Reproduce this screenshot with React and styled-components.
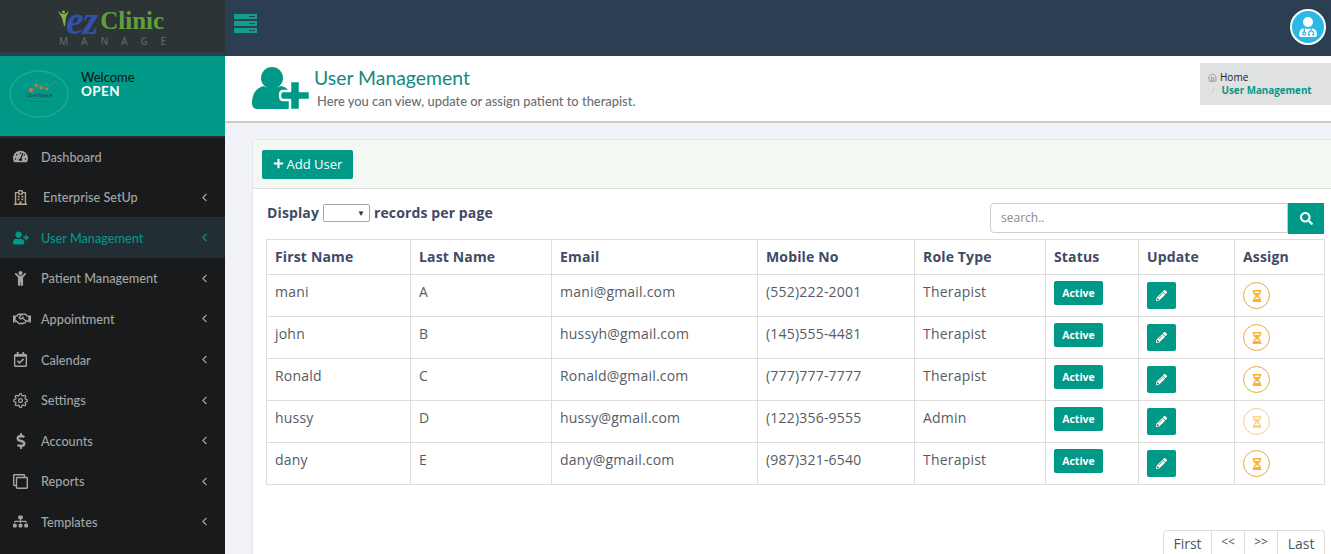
import React from 'react';
import styled, { createGlobalStyle } from 'styled-components';
import {
  FaTachometerAlt, FaRegHospital, FaUserPlus, FaChild, FaRegHandshake, FaRegCalendarCheck,
  FaDollarSign, FaRegClone, FaSitemap, FaPlus, FaPencilAlt, FaSearch, FaHourglassHalf,
  FaUserMd
} from 'react-icons/fa';
import { FiChevronLeft, FiSettings, FiHome } from 'react-icons/fi';

const teal = '#009886';

const Global = createGlobalStyle`
  html, body { margin: 0; padding: 0; height: 100%; overflow: hidden; }
  body { font-family: "Open Sans", sans-serif; background: #f1f2f7; color: #555; }
  * { box-sizing: border-box; }
`;

const Shell = styled.div`
  display: grid;
  grid-template-columns: 225px 1fr;
  height: 554px;
  overflow: hidden;
`;

const Sidebar = styled.aside`
  background: #181a1b;
  display: flex;
  flex-direction: column;
`;

const LogoBar = styled.div`
  height: 56px;
  background: #2d3436;
  border-bottom: 4px solid #2b3e52;
  display: flex;
  flex-direction: column;
  align-items: center;
  padding: 7px 0 0 0;
`;

const LogoMark = styled.div`
  display: flex;
  align-items: center;
  height: 27px;
  font-family: "Liberation Serif", serif;
  font-weight: 700;
  line-height: 27px;
`;

const LogoFigure = styled.svg`
  width: 11px;
  height: 16px;
  margin: -6px -3px 0 -3px;
`;

const LogoEz = styled.span`
  color: #2f52a8;
  font-size: 40px;
  font-style: italic;
  letter-spacing: -1px;
`;

const LogoClinic = styled.span`
  color: #5fa03a;
  font-size: 25px;
  margin-left: 3px;
`;

const LogoSub = styled.div`
  color: #5c6163;
  font-size: 10px;
  font-weight: 600;
  letter-spacing: 12.8px;
  line-height: 12px;
  margin-top: 1px;
  padding-left: 13px;
`;

const Welcome = styled.div`
  height: 80px;
  background: ${teal};
  display: flex;
  padding: 14px 0 0 9px;
`;

const Avatar = styled.svg`
  width: 60px;
  height: 48px;
`;

const WelcomeText = styled.div`
  margin-left: 12px;
  font-family: "Lato", sans-serif;
  font-size: 13px;
  line-height: 14px;
  color: #0b1512;
`;

const OpenName = styled.div`
  color: #fff;
  font-weight: 700;
  font-size: 13.5px;
  letter-spacing: 0.4px;
`;

const Menu = styled.nav`
  display: flex;
  flex-direction: column;
  padding-top: 0.3px;
  box-shadow: inset 0 2px 0 #2a2d30;
`;

const MenuItem = styled.div`
  height: 40.6px;
  display: flex;
  align-items: center;
  padding: 0 14px 0 13px;
  background: ${p => (p.$active ? '#232e34' : 'transparent')};
  color: ${p => (p.$active ? teal : '#a3a5a6')};
  font-family: "Lato", sans-serif;
  font-size: 12.7px;
  font-weight: 500;
`;

const MenuIcon = styled.span`
  width: 28px;
  font-size: ${p => p.$size || 15}px;
  color: ${p => p.$color || 'inherit'};
  display: flex;
  align-items: center;
  transform-origin: 8px center;
  transform: ${p => (p.$flip ? 'scaleY(-1)' : 'none')};
`;

const MenuLabel = styled.span`
  flex: 1;
  padding-left: ${p => (p.$shift ? '2px' : '0')};
`;

const Main = styled.main`
  display: flex;
  flex-direction: column;
  min-width: 0;
`;

const TopBar = styled.header`
  height: 56px;
  background: #2b3e52;
  display: flex;
  align-items: flex-start;
  justify-content: space-between;
  padding: 9px 5px 0 9px;
`;

const MenuToggle = styled.svg`
  width: 23px;
  height: 19px;
  margin-top: 5px;
`;

const UserBadge = styled.div`
  width: 36px;
  height: 36px;
  border-radius: 50%;
  background: #29b9e4;
  border: 2px solid #fff;
  color: #fff;
  display: flex;
  align-items: center;
  justify-content: center;
  font-size: 20px;
`;

const TitleBar = styled.section`
  height: 67px;
  background: #fff;
  border-bottom: 2px solid #c9cacc;
  display: flex;
  padding: 7px 0 0 26px;
  justify-content: space-between;
`;

const TitleLeft = styled.div`
  display: flex;
  gap: 4px;
`;

const TitleIcon = styled.svg`
  width: 59px;
  height: 47px;
  color: ${teal};
`;

const TitleText = styled.div`
  padding-top: 2px;
`;

const Heading = styled.h1`
  margin: 0;
  color: #14897b;
  font-family: "Lato", sans-serif;
  font-weight: 400;
  font-size: 19.4px;
  line-height: 25px;
`;

const SubHeading = styled.div`
  margin: 3px 0 0 3px;
  color: #6a6f73;
  font-family: "Lato", sans-serif;
  font-size: 12.9px;
  font-weight: 500;
  line-height: 16px;
`;

const Breadcrumb = styled.div`
  width: 131px;
  height: 42px;
  background: #e0e1e3;
  padding: 7px 0 0 8px;
  font-size: 10px;
  line-height: 14px;
  color: #222;
`;

const CrumbHome = styled.div`
  display: flex;
  align-items: center;
  gap: 3px;
  svg { color: #888; font-size: 9px; }
`;

const CrumbCurrent = styled.div`
  color: ${teal};
  font-weight: 700;
  font-size: 9.8px;
  padding-left: 3px;
  span { color: #ccc; font-weight: 400; margin-right: 7px; }
`;

const Content = styled.div`
  flex: 1;
  padding: 16px 0 0 27px;
`;

const Panel = styled.div`
  background: #fff;
  height: 100%;
  border-radius: 4px 0 0 0;
  border-left: 1px solid #e3e4e6;
  border-top: 1px solid #e6e7e9;
`;

const Toolbar = styled.div`
  height: 49px;
  background: #f3f8f3;
  border-bottom: 1px solid #dcdedd;
  padding: 10px 0 0 9px;
`;

const AddButton = styled.button`
  height: 29px;
  width: 91px;
  border: 0;
  border-radius: 2px;
  background: ${teal};
  color: #fff;
  font-family: "Open Sans", sans-serif;
  font-size: 13px;
  padding: 0 0 2px;
  display: flex;
  align-items: center;
  justify-content: center;
  gap: 3px;
  svg { font-size: 11px; }
`;

const Body = styled.div`
  padding: 0 6px 0 13px;
`;

const Controls = styled.div`
  height: 50px;
  display: flex;
  justify-content: space-between;
  align-items: flex-start;
`;

const Display = styled.div`
  display: flex;
  align-items: center;
  gap: 4px;
  margin: 14px 0 0 1px;
  font-size: 14px;
  font-weight: 700;
  color: #3f4a66;
  line-height: 20px;
  letter-spacing: 0.12px;
`;

const PageSize = styled.div`
  width: 47px;
  height: 18px;
  border: 1px solid #a6a6a6;
  border-radius: 2px;
  display: flex;
  justify-content: flex-end;
  align-items: center;
  padding-right: 4px;
  color: #333;
  font-size: 8px;
  font-weight: 400;
`;

const Search = styled.div`
  display: flex;
  margin: 14px 1px 0 0;
`;

const SearchInput = styled.input`
  width: 298px;
  height: 30px;
  border: 1px solid #ccc;
  border-radius: 4px 0 0 4px;
  padding: 0 10px 2px;
  font-family: "Open Sans", sans-serif;
  font-size: 12px;
  outline: none;
  &::placeholder { color: #8a8a8a; }
`;

const SearchButton = styled.button`
  width: 36px;
  height: 31px;
  border: 0;
  background: ${teal};
  color: #fff;
  font-size: 13px;
  padding: 0;
  display: flex;
  align-items: center;
  justify-content: center;
`;

const Table = styled.table`
  width: 1058px;
  table-layout: fixed;
  border-collapse: collapse;
  font-size: 14px;
  color: #555c66;
`;

const Th = styled.th`
  height: 35px;
  border: 1px solid #dddddd;
  text-align: left;
  padding: 0 8px 1px;
  font-weight: 700;
  color: #3f4a66;
  font-size: 14px;
  letter-spacing: 0.15px;
`;

const Td = styled.td`
  height: 42px;
  border: 1px solid #dddddd;
  padding: 0 8px 9px;
  letter-spacing: 0.2px;
`;

const ToolCell = styled(Td)`
  padding: 0 8px;
`;

const Badge = styled.span`
  display: inline-flex;
  align-items: center;
  justify-content: center;
  width: 49px;
  height: 24px;
  margin-bottom: 6px;
  background: ${teal};
  border-radius: 2px;
  color: #fff;
  font-size: 10.5px;
  font-weight: 700;
  letter-spacing: 0;
  vertical-align: middle;
`;

const EditButton = styled.span`
  display: inline-flex;
  align-items: center;
  justify-content: center;
  width: 29px;
  height: 27px;
  background: ${teal};
  border-radius: 2px;
  color: #fff;
  font-size: 11px;
  vertical-align: middle;
`;

const AssignIcon = styled.span`
  display: inline-flex;
  align-items: center;
  justify-content: center;
  width: 27px;
  height: 27px;
  border-radius: 50%;
  border: 1px solid ${p => (p.$faded ? '#f2d08f' : '#e8a93a')};
  color: ${p => (p.$faded ? '#fdd58a' : '#fdb22f')};
  font-size: 12px;
  vertical-align: middle;
`;

const Pager = styled.div`
  display: flex;
  justify-content: flex-end;
  margin-top: 45px;
`;

const PageLink = styled.span`
  height: 34px;
  padding: ${p => (p.$small ? '3px 0 0' : '4px 0 0')};
  width: ${p => (p.$small ? '33px' : p.$first ? '49px' : '47px')};
  border: 1px solid #ddd;
  border-left-width: ${p => (p.$first ? '1px' : '0')};
  border-radius: ${p => (p.$first ? '4px 0 0 0' : p.$last ? '0 4px 0 0' : '0')};
  color: #4a5566;
  font-size: ${p => (p.$small ? '12px' : '14px')};
  line-height: ${p => (p.$small ? '16px' : '18px')};
  text-align: center;
`;

const menu = [
  { label: 'Dashboard', icon: FaTachometerAlt, noArrow: true },
  { label: 'Enterprise SetUp', icon: FaRegHospital, shift: true, color: '#b5a58a' },
  { label: 'User Management', icon: FaUserPlus, active: true, size: 16 },
  { label: 'Patient Management', icon: FaChild },
  { label: 'Appointment', icon: FaRegHandshake, size: 18 },
  { label: 'Calendar', icon: FaRegCalendarCheck },
  { label: 'Settings', icon: FiSettings },
  { label: 'Accounts', icon: FaDollarSign, size: 16 },
  { label: 'Reports', icon: FaRegClone, flip: true },
  { label: 'Templates', icon: FaSitemap }
];

const users = [
  ['mani', 'A', 'mani@gmail.com', '(552)222-2001', 'Therapist'],
  ['john', 'B', 'hussyh@gmail.com', '(145)555-4481', 'Therapist'],
  ['Ronald', 'C', 'Ronald@gmail.com', '(777)777-7777', 'Therapist'],
  ['hussy', 'D', 'hussy@gmail.com', '(122)356-9555', 'Admin', true],
  ['dany', 'E', 'dany@gmail.com', '(987)321-6540', 'Therapist']
];

const columns = [
  ['First Name', 144], ['Last Name', 141], ['Email', 206], ['Mobile No', 157],
  ['Role Type', 131], ['Status', 93], ['Update', 96], ['Assign', 90]
];

const App = () => (
  <Shell>
    <Global />
    <Sidebar>
      <LogoBar>
        <LogoMark>
          <LogoFigure viewBox="0 0 11 16">
            <circle cx="5.5" cy="2" r="1.6" fill="#7ab648" />
            <path fill="#7ab648" d="M0 1l4 3h3l4-3-3 6-1 9H6L4 8z" />
          </LogoFigure>
          <LogoEz>ez</LogoEz>
          <LogoClinic>Clinic</LogoClinic>
        </LogoMark>
        <LogoSub>MANAGE</LogoSub>
      </LogoBar>
      <Welcome>
        <Avatar viewBox="0 0 60 48">
          <ellipse cx="30" cy="24" rx="29" ry="23" fill="none" stroke="#1fa796" strokeWidth="1.5" />
          <path fill="none" stroke="#c9733a" strokeWidth="0.7" d="M24 19l7-4 6 4 10-8" />
          <circle cx="22" cy="20" r="2" fill="#e8702a" />
          <circle cx="27" cy="15" r="1.5" fill="#e8702a" />
          <circle cx="32" cy="18" r="1.5" fill="#e8702a" />
          <circle cx="38" cy="19" r="1.2" fill="#e8702a" />
          <text x="30" y="27" textAnchor="middle" fontSize="5" fontFamily="Open Sans" fill="#24413f">OpenSpace</text>
          <text x="30" y="32" textAnchor="middle" fontSize="2.5" letterSpacing="0.6" fontFamily="Open Sans" fill="#24413f">CONSULTS</text>
        </Avatar>
        <WelcomeText>
          Welcome
          <OpenName>OPEN</OpenName>
        </WelcomeText>
      </Welcome>
      <Menu>
        {menu.map(item => (
          <MenuItem key={item.label} $active={item.active}>
            <MenuIcon $size={item.size} $flip={item.flip} $color={item.color}><item.icon /></MenuIcon>
            <MenuLabel $shift={item.shift}>{item.label}</MenuLabel>
            {!item.noArrow && <FiChevronLeft size={13} />}
          </MenuItem>
        ))}
      </Menu>
    </Sidebar>
    <Main>
      <TopBar>
        <MenuToggle viewBox="0 0 23 19">
          <path fill="#0f9f8c" d="M0 0h23v5H0zM0 7h23v5H0zM0 14h23v5H0z" />
          <path fill="#2b3e52" d="M15 2h6v1h-6zM15 9h6v1h-6zM15 16h6v1h-6z" />
        </MenuToggle>
        <UserBadge><FaUserMd /></UserBadge>
      </TopBar>
      <TitleBar>
        <TitleLeft>
          <TitleIcon viewBox="0 0 59 47">
            <circle cx="21" cy="15" r="11" fill={teal} />
            <path fill={teal} d="M1 40c0-10 5-15 11-17 5 3 13 3 18 0 5 1 9 4 9 8v15H6c-3 0-5-2-5-6z" />
            <path fill={teal} stroke="#fff" strokeWidth="2.5" strokeLinejoin="round" d="M39 18h10v10h10v9H49v10H39V37H32c-2 0-3-2-3-4.500s1-4.500 3-4.500h7z" />
          </TitleIcon>
          <TitleText>
            <Heading>User Management</Heading>
            <SubHeading>Here you can view, update or assign patient to therapist.</SubHeading>
          </TitleText>
        </TitleLeft>
        <Breadcrumb>
          <CrumbHome><FiHome /> Home</CrumbHome>
          <CrumbCurrent><span>/</span>User Management</CrumbCurrent>
        </Breadcrumb>
      </TitleBar>
      <Content>
        <Panel>
          <Toolbar>
            <AddButton><FaPlus /> Add User</AddButton>
          </Toolbar>
          <Body>
            <Controls>
              <Display>
                Display <PageSize>▼</PageSize> records per page
              </Display>
              <Search>
                <SearchInput placeholder="search.." />
                <SearchButton><FaSearch /></SearchButton>
              </Search>
            </Controls>
            <Table>
              <colgroup>
                {columns.map(([name, width]) => <col key={name} width={width} />)}
              </colgroup>
              <thead>
                <tr>{columns.map(([name]) => <Th key={name}>{name}</Th>)}</tr>
              </thead>
              <tbody>
                {users.map(([first, last, email, mobile, role, faded]) => (
                  <tr key={email}>
                    <Td>{first}</Td>
                    <Td>{last}</Td>
                    <Td>{email}</Td>
                    <Td>{mobile}</Td>
                    <Td>{role}</Td>
                    <ToolCell><Badge>Active</Badge></ToolCell>
                    <ToolCell><EditButton><FaPencilAlt /></EditButton></ToolCell>
                    <ToolCell><AssignIcon $faded={faded}><FaHourglassHalf /></AssignIcon></ToolCell>
                  </tr>
                ))}
              </tbody>
            </Table>
            <Pager>
              <PageLink $first>First</PageLink>
              <PageLink $small>&lt;&lt;</PageLink>
              <PageLink $small>&gt;&gt;</PageLink>
              <PageLink $last>Last</PageLink>
            </Pager>
          </Body>
        </Panel>
      </Content>
    </Main>
  </Shell>
);

export default App;
